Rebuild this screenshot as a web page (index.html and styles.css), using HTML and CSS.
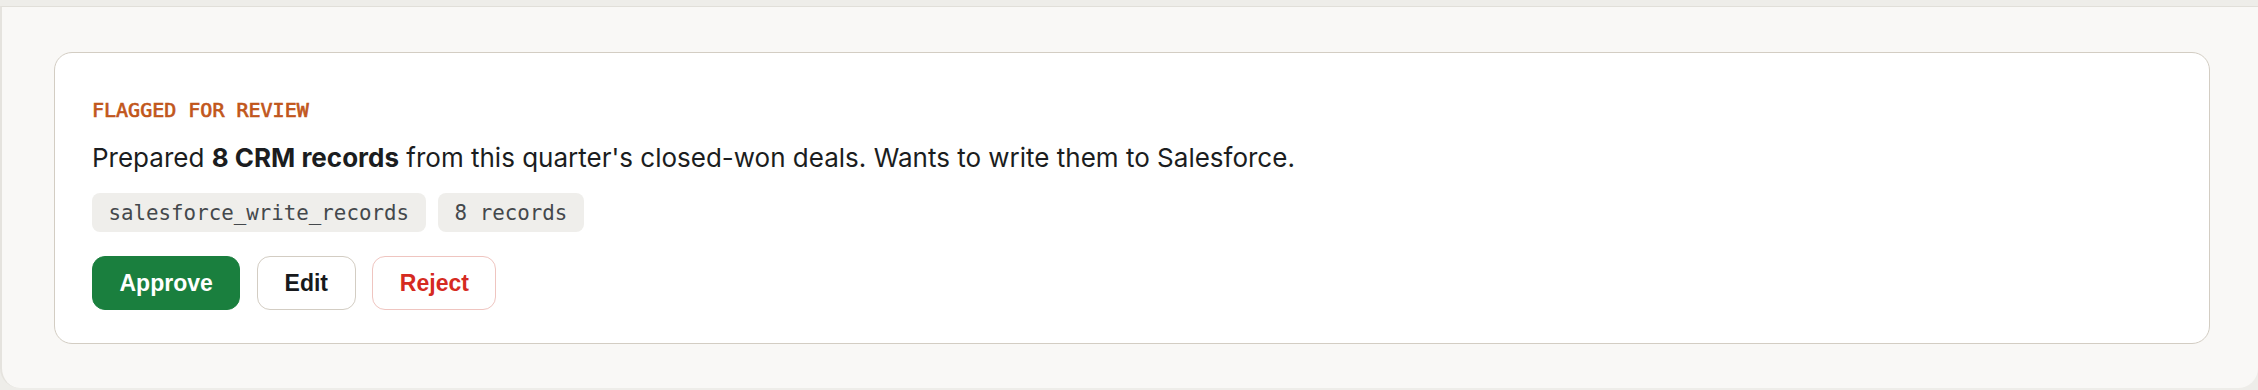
FILE: index.html
```html
<!DOCTYPE html>
<html lang="en">
<head>
<meta charset="utf-8">
<title>Flagged for review</title>
<link rel="stylesheet" href="styles.css">
</head>
<body>
  <div class="frame">
    <section class="card">
      <div class="label">FLAGGED FOR REVIEW</div>
      <p class="summary">Prepared <strong>8 CRM records</strong> from this quarter's closed-won deals. Wants to write them to Salesforce.</p>
      <div class="chips">
        <span class="chip">salesforce_write_records</span>
        <span class="chip">8 records</span>
      </div>
      <div class="actions">
        <button class="btn btn-approve">Approve</button>
        <button class="btn btn-edit">Edit</button>
        <button class="btn btn-reject">Reject</button>
      </div>
    </section>
  </div>
</body>
</html>
```

FILE: styles.css
```css
html, body {
  margin: 0;
  padding: 0;
}

body {
  background: #eeede9;
  height: 390px;
  overflow: hidden;
  font-family: "Inter", "Noto Sans", sans-serif;
}

.frame {
  margin-top: 6px;
  border-top: 1px solid #e1dfd9;
  border-left: 2px solid #e5e3de;
  background: #f9f8f6;
  border-radius: 0 0 20px 20px;
  padding: 45px 48px 44px 52px;
}

.card {
  background: #ffffff;
  border: 1px solid #d3cdc3;
  border-radius: 18px;
  padding: 45px 36px 33px 37px;
}

.label {
  font-family: "DejaVu Sans Mono", "Liberation Mono", monospace;
  font-size: 20px;
  line-height: 24px;
  font-weight: 400;
  color: #c1561b;
  -webkit-text-stroke: 0.7px #c1561b;
}

.summary {
  margin: 18px 0 0;
  font-size: 26px;
  line-height: 36px;
  color: #1b1d20;
}

.summary strong {
  font-weight: 700;
}

.chips {
  display: flex;
  gap: 12.6px;
  margin-top: 17.4px;
}

.chip {
  display: inline-flex;
  align-items: center;
  height: 38.4px;
  padding: 0 16.5px;
  border-radius: 8px;
  background: #efeeeb;
  color: #44484c;
  font-family: "DejaVu Sans Mono", "Liberation Mono", monospace;
  font-size: 20.8px;
}

.actions {
  display: flex;
  gap: 16.8px;
  margin-top: 24.3px;
}

.btn {
  display: inline-flex;
  align-items: center;
  justify-content: center;
  height: 54.3px;
  padding: 0 26.5px;
  border-radius: 13px;
  font-family: "Liberation Sans", Arial, sans-serif;
  font-weight: 700;
  font-size: 23px;
  background: #ffffff;
  border: 1px solid #d3cdc3;
  cursor: pointer;
}

.btn-approve {
  background: #1a7f3e;
  border-color: #1a7f3e;
  color: #ffffff;
}

.btn-edit {
  color: #17191c;
}

.btn-reject {
  color: #d52a21;
  border-color: #efc5c0;
}
```
